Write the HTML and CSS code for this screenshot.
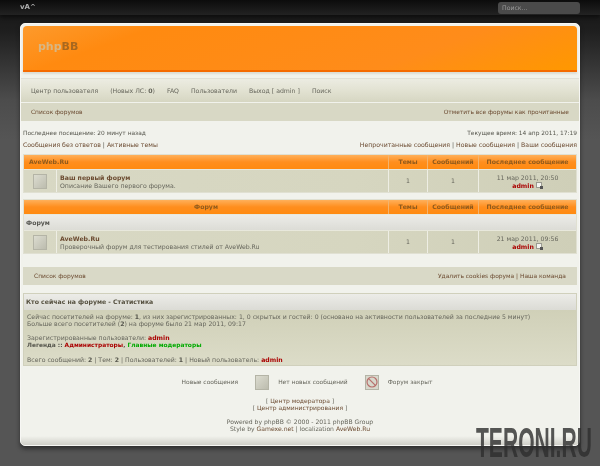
FILE: index.html
```html
<!DOCTYPE html>
<html lang="ru">
<head>
    <meta charset="UTF-8">
    <title>AveWeb.Ru</title>
    <link rel="stylesheet" href="styles.css">
</head>
<body>
    <div class="topbar">
        <span class="font-size">vA^</span>
        <div class="search-box">Поиск...</div>
    </div>

    <div class="wrap">
        <div class="logo-box"><span class="logo-a">php</span><span class="logo-b">BB</span></div>

        <div class="nav">
            <span>Центр пользователя</span>
            <span>(Новых ЛС: <b>0</b>)</span>
            <span>FAQ</span>
            <span>Пользователи</span>
            <span>Выход [ admin ]</span>
            <span>Поиск</span>
        </div>

        <div class="crumbs">
            <a>Список форумов</a>
            <a>Отметить все форумы как прочитанные</a>
        </div>

        <div class="info">
            <div class="info-row small">
                <span>Последнее посещение: 20 минут назад</span>
                <span>Текущее время: 14 апр 2011, 17:19</span>
            </div>
            <div class="info-row links">
                <span><a>Сообщения без ответов</a> | <a>Активные темы</a></span>
                <span><a>Непрочитанные сообщения</a> | <a>Новые сообщения</a> | <a>Ваши сообщения</a></span>
            </div>
        </div>

        <div class="forum-table first">
            <div class="thead">
                <div class="th th-left">AveWeb.Ru</div>
                <div class="th">Темы</div>
                <div class="th">Сообщений</div>
                <div class="th">Последнее сообщение</div>
            </div>
            <div class="trow">
                <div class="td-icon"><div class="folder"></div></div>
                <div class="td-forum">
                    <a class="forum-name">Ваш первый форум</a>
                    <div>Описание Вашего первого форума.</div>
                </div>
                <div class="td">1</div>
                <div class="td">1</div>
                <div class="td last">
                    <div>11 мар 2011, 20:50</div>
                    <div><b class="admin">admin</b> <svg class="post-icon" width="7" height="7" viewBox="0 0 7 7"><rect x="0.5" y="0.5" width="5" height="5" fill="#f4f4f0" stroke="#9a9a90"/><rect x="4" y="4" width="3" height="3" fill="#555"/></svg></div>
                </div>
            </div>
        </div>

        <div class="forum-table second">
            <div class="thead">
                <div class="th th-center">Форум</div>
                <div class="th">Темы</div>
                <div class="th">Сообщений</div>
                <div class="th">Последнее сообщение</div>
            </div>
            <div class="cat-row">Форум</div>
            <div class="trow">
                <div class="td-icon"><div class="folder"></div></div>
                <div class="td-forum">
                    <a class="forum-name">AveWeb.Ru</a>
                    <div>Проверочный форум для тестирования стилей от AveWeb.Ru</div>
                </div>
                <div class="td">1</div>
                <div class="td">1</div>
                <div class="td last">
                    <div>21 мар 2011, 09:56</div>
                    <div><b class="admin">admin</b> <svg class="post-icon" width="7" height="7" viewBox="0 0 7 7"><rect x="0.5" y="0.5" width="5" height="5" fill="#f4f4f0" stroke="#9a9a90"/><rect x="4" y="4" width="3" height="3" fill="#555"/></svg></div>
                </div>
            </div>
        </div>

        <div class="bottom-bar">
            <a>Список форумов</a>
            <a>Удалить cookies форума | Наша команда</a>
        </div>

        <div class="stats">
            <div class="stats-title">Кто сейчас на форуме - Статистика</div>
            <div class="stats-body">
                <p>Сейчас посетителей на форуме: <b>1</b>, из них зарегистрированных: 1, 0 скрытых и гостей: 0 (основано на активности пользователей за последние 5 минут)<br>
                Больше всего посетителей (<b>2</b>) на форуме было 21 мар 2011, 09:17</p>
                <p>Зарегистрированные пользователи: <b class="admin">admin</b><br>
                <span class="legend">Легенда :: <span class="red">Администраторы</span>, <span class="green">Главные модераторы</span></span></p>
                <p>Всего сообщений: <b>2</b> | Тем: <b>2</b> | Пользователей: <b>1</b> | Новый пользователь: <b class="admin">admin</b></p>
            </div>
        </div>

        <div class="icons-legend">
            <span class="legend-label">Новые сообщения</span>
            <div class="folder"></div>
            <span class="legend-label">Нет новых сообщений</span>
            <div class="folder locked">
                <svg width="12" height="12" viewBox="0 0 12 12"><circle cx="6" cy="6" r="5" fill="none" stroke="#b8706c" stroke-width="1.2"/><path d="M2.6 2.6 9.4 9.4" stroke="#b8706c" stroke-width="1.2"/></svg>
            </div>
            <span class="legend-label">Форум закрыт</span>
        </div>

        <div class="admin-links">
            <div>[ <a>Центр модератора</a> ]</div>
            <div>[ <a>Центр администрирования</a> ]</div>
        </div>

        <div class="copyright">
            <div>Powered by phpBB © 2000 - 2011 phpBB Group</div>
            <div>Style by <a>Gamexe.net</a> | localization <a>AveWeb.Ru</a></div>
        </div>

        <div class="wrap-bottom"></div>
    </div>

    <div class="watermark">TERONI.RU</div>
</body>
</html>
```

FILE: styles.css
```css
* {
    margin: 0;
    padding: 0;
    box-sizing: border-box;
}

html, body {
    height: 466px;
    overflow: hidden;
}

body {
    background: linear-gradient(180deg, #161616 0px, #1e1e1e 30px, #4c4c4c 100px, #555555 140px, #555555 100%);
    font-family: "DejaVu Sans", sans-serif;
    font-size: 6.2px;
    line-height: 8px;
    color: #66665c;
    position: relative;
}

a {
    color: #6b4a30;
}

.topbar {
    height: 15px;
    background: linear-gradient(180deg, #0c0c0c 0%, #222222 100%);
    display: flex;
    justify-content: space-between;
    padding: 2px 20px;
    margin-bottom: 8px;
    box-shadow: 0 2px 4px #0c0c0c;
    filter: blur(0.3px);
}

.font-size {
    color: #b0b0b0;
    font-size: 7px;
    font-weight: bold;
    line-height: 10px;
}

.search-box {
    width: 82px;
    height: 12px;
    background: #4a4a4a;
    border-radius: 3px;
    color: #9a9a9a;
    padding: 1px 4px;
    font-size: 6.2px;
    line-height: 10px;
}

.wrap {
    width: 560px;
    height: 423px;
    margin-left: 20px;
    background: #f1f2ec;
    border-radius: 5px;
    border: 1px solid #f7f7f4;
    padding: 2px;
    box-shadow: 0 3px 4px rgba(20, 20, 20, 0.6);
    position: relative;
    overflow: hidden;
    filter: blur(0.3px);
}

.logo-box {
    height: 46px;
    background: linear-gradient(160deg, #fd9a2c 0%, #ff8a10 20%, #ff8c1a 70%, #ff9800 100%);
    border-bottom: 2px solid #f56a00;
    border-radius: 4px 4px 0 0;
    padding: 14px 15px;
    font-size: 11px;
    font-weight: bold;
    line-height: 14px;
    box-shadow: 0 2px 2px #dcdcd4;
}

.logo-a {
    color: #d8b684;
}

.logo-b {
    color: #a8681f;
}

.nav {
    display: flex;
    gap: 12px;
    margin: 6px -2px 0;
    padding: 0 10px;
    height: 24px;
    align-items: center;
    background: linear-gradient(180deg, #ecece2 0%, #e2e2d2 50%, #d6d6c2 100%);
    border-top: 1px solid #e0e0d8;
}

.crumbs {
    display: flex;
    justify-content: space-between;
    align-items: center;
    height: 18px;
    margin: 1px -2px 0;
    padding: 0 10px 0 10px;
    background: #d8d8c5;
    font-size: 5.9px;
}

.info {
    padding-top: 8px;
}

.info-row {
    display: flex;
    justify-content: space-between;
    line-height: 9px;
    color: #55554c;
}

.info-row.small {
    font-size: 5.9px;
    margin-bottom: 2px;
}

.forum-table {
    border: 1px solid #e0e0d2;
}

.forum-table.first {
    margin-top: 5px;
}

.forum-table.second {
    margin-top: 6px;
}

.thead {
    display: grid;
    grid-template-columns: 364px 39px 51px 1fr;
    height: 14px;
    background: linear-gradient(180deg, #ffb05a 0%, #ff8e1e 50%, #ff8a10 100%);
}

.th {
    text-align: center;
    font-weight: bold;
    color: #8f5a1c;
    line-height: 14px;
    border-left: 1px solid #f3b36c;
}

.th-left {
    text-align: left;
    padding-left: 5px;
    border-left: 0;
}

.th-center {
    border-left: 0;
}

.trow {
    display: grid;
    grid-template-columns: 33px 331px 39px 51px 1fr;
    height: 23px;
    background: linear-gradient(100deg, #d8d8c4 0%, #d6d6c0 60%, #cfcfb8 100%);
    border-top: 1px solid #e8e8dc;
}

.td-icon {
    display: flex;
    align-items: center;
    justify-content: center;
    border-right: 1px solid #eeeee4;
}

.td-forum {
    padding: 4px 3px 0;
}

.forum-name {
    display: block;
    font-weight: bold;
    color: #6b4a30;
}

.td {
    text-align: center;
    line-height: 21px;
    border-left: 1px solid #eeeee4;
}

.td.last {
    line-height: 8px;
    padding-top: 4px;
}

.folder {
    width: 14px;
    height: 15px;
    background: linear-gradient(135deg, #dcdcd0 0%, #bcbcae 100%);
    border: 1px solid #b4b4a6;
    display: flex;
    align-items: center;
    justify-content: center;
}

.admin {
    color: #aa0000;
}

.post-icon {
    vertical-align: -1px;
}

.cat-row {
    height: 16px;
    line-height: 15px;
    padding-left: 2px;
    font-weight: bold;
    color: #555550;
    background: linear-gradient(180deg, #ecece8 0%, #dcdcd6 100%);
    border-top: 1px solid #e8e8dc;
}

.bottom-bar {
    display: flex;
    justify-content: space-between;
    align-items: center;
    height: 18px;
    margin-top: 13px;
    padding: 0 11px;
    background: #d9d9c7;
    font-size: 5.95px;
}

.stats {
    margin-top: 8px;
    border: 1px solid #d0d0bc;
}

.stats-title {
    height: 16px;
    line-height: 15px;
    padding-left: 2px;
    font-weight: bold;
    color: #55503f;
    background: linear-gradient(180deg, #ecece8 0%, #dbdbd5 100%);
}

.stats-body {
    height: 55px;
    padding: 3px 3px 0;
    background: linear-gradient(180deg, #d0d0b8 0%, #dcdcc8 100%);
    line-height: 7px;
    white-space: nowrap;
}

.stats-body p {
    margin-bottom: 7px;
}

.stats-body b {
    color: #55554c;
}

.stats-body b.admin {
    color: #aa0000;
}

.legend {
    font-size: 5.9px;
    font-weight: bold;
    color: #55554c;
}

.red {
    color: #aa0000;
}

.green {
    color: #00aa00;
}

.icons-legend {
    display: flex;
    justify-content: center;
    align-items: center;
    margin-top: 8px;
    height: 16px;
    font-size: 5.95px;
    padding-left: 22px;
}

.legend-label {
    margin: 0 17px 0 9px;
}

.locked {
    background: #d8d8cc;
}

.admin-links {
    margin-top: 7px;
    text-align: center;
    font-size: 6px;
    line-height: 7px;
}

.copyright {
    margin-top: 7px;
    text-align: center;
    font-size: 6.08px;
    line-height: 7px;
}

.wrap-bottom {
    position: absolute;
    left: 0;
    right: 0;
    bottom: 0;
    height: 9px;
    background: linear-gradient(180deg, #f1f2ec 0%, #cfcfc8 100%);
}

.watermark {
    position: absolute;
    left: 476px;
    top: 422px;
    font-family: "Liberation Sans", sans-serif;
    font-weight: bold;
    font-size: 43px;
    line-height: 40px;
    color: #2e2e2e;
    transform: scaleX(0.49);
    transform-origin: left top;
    white-space: nowrap;
    opacity: 0.8;
}
```
